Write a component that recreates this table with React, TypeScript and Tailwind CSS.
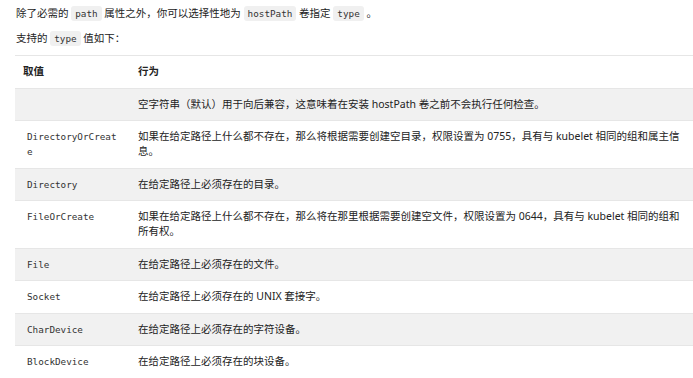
import React from "react";

const CJK = '"Noto Sans", "Noto Sans CJK SC", sans-serif';

function C({ children }: { children: React.ReactNode }) {
  return (
    <code className="rounded-[3px] bg-[#f0f0f0] px-[4px] py-[2px] font-['DejaVu_Sans_Mono',monospace] text-[9.3px] text-[#333]">
      {children}
    </code>
  );
}

const rows: [string, string][] = [
  ["", "空字符串（默认）用于向后兼容，这意味着在安装 hostPath 卷之前不会执行任何检查。"],
  ["DirectoryOrCreate", "如果在给定路径上什么都不存在，那么将根据需要创建空目录，权限设置为 0755，具有与 kubelet 相同的组和属主信息。"],
  ["Directory", "在给定路径上必须存在的目录。"],
  ["FileOrCreate", "如果在给定路径上什么都不存在，那么将在那里根据需要创建空文件，权限设置为 0644，具有与 kubelet 相同的组和所有权。"],
  ["File", "在给定路径上必须存在的文件。"],
  ["Socket", "在给定路径上必须存在的 UNIX 套接字。"],
  ["CharDevice", "在给定路径上必须存在的字符设备。"],
  ["BlockDevice", "在给定路径上必须存在的块设备。"],
];

export default function App() {
  return (
    <div
      className="h-[378px] w-[693px] overflow-hidden bg-white pl-[15px] text-[10.5px] leading-[16px] text-[#222]"
      style={{ fontFamily: CJK }}
    >
      <p className="mt-[5px] pl-[1px]">
        除了必需的 <C>path</C> 属性之外，你可以选择性地为 <C>hostPath</C> 卷指定 <C>type</C> 。
      </p>
      <p className="mt-[8px] pl-[1px]">
        支持的 <C>type</C> 值如下：
      </p>
      <table className="mt-[8px] w-full border-collapse">
        <thead>
          <tr className="border-y border-[#e6e6e6]">
            <th className="w-[115px] px-[8px] py-[8.25px] text-left align-top text-[10.5px] font-bold leading-[15px]">取值</th>
            <th className="px-[8px] py-[8.25px] text-left align-top text-[10.5px] font-bold leading-[15px]">行为</th>
          </tr>
        </thead>
        <tbody>
          {rows.map(([k, v], i) => (
            <tr key={i} className={`border-b border-[#e6e6e6] ${i % 2 === 0 ? "bg-[#f1f1f1]" : "bg-white"}`}>
              <td className="w-[115px] px-[8px] py-[8.25px] align-top leading-[15px]">
                {k && (
                  <code className="block break-all px-[4px] font-['DejaVu_Sans_Mono',monospace] text-[9.3px] leading-[15px] text-[#333]">
                    {k}
                  </code>
                )}
              </td>
              <td className="py-[8.25px] pl-[8px] pr-[9px] align-top leading-[15px]">{v}</td>
            </tr>
          ))}
        </tbody>
      </table>
    </div>
  );
}
